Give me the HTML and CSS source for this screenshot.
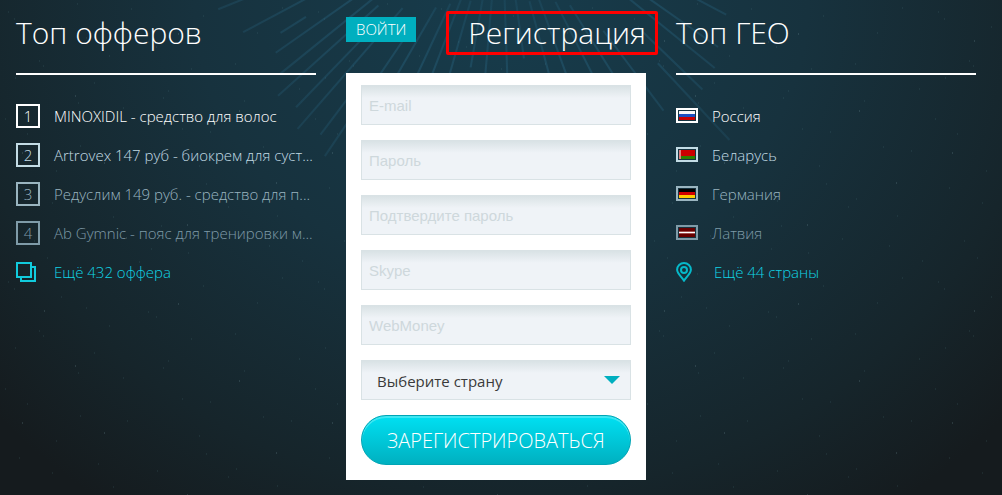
FILE: index.html
```html
<!DOCTYPE html>
<html lang="ru">

<head>
    <meta charset="UTF-8">
    <meta name="viewport" content="width=device-width, initial-scale=1.0">
    <title>Регистрация</title>
    <link rel="stylesheet" href="styles.css">
</head>

<body>
    <svg class="sky" aria-hidden="true">
        <defs>
            <linearGradient id="ray" gradientUnits="userSpaceOnUse" x1="0" y1="90" x2="0" y2="330">
                <stop offset="0" stop-color="#2a6b8a" stop-opacity="0.15" />
                <stop offset="0.4" stop-color="#2a6b8a" stop-opacity="0.35" />
                <stop offset="1" stop-color="#2a6b8a" stop-opacity="0.2" />
            </linearGradient>
            <pattern id="dust" width="310" height="270" patternUnits="userSpaceOnUse">
                <path class="dust-dim" d="M8 12h1M14 19h1M61 27h1M77 4h1M86 38h1M131 9h1M148 42h1M156 47h1M203 16h1M257 33h1M282 8h1M15 78h1M39 61h1M43 66h1M94 83h1M109 56h1M163 98h1M168 91h1M191 69h1M235 64h1M244 101h1M299 89h1M5 119h1M27 134h1M78 103h1M80 146h1M123 108h1M127 151h1M182 129h1M199 166h1M210 132h1M263 147h1M291 151h1M19 188h1M52 203h1M56 171h1M98 194h1M113 217h1M157 201h1M161 226h1M206 184h1M228 207h1M236 199h1M277 216h1M34 241h1M47 258h1M90 236h1M139 262h1M151 249h1M188 253h1M222 239h1M269 246h1M302 261h1" />
                <path class="dust-bright" d="M44 41h1M178 34h1M239 111h1M22 153h1M104 163h1M276 183h1M75 96h1M187 225h1M126 238h1" />
            </pattern>
        </defs>
        <rect width="100%" height="100%" fill="url(#dust)" />
        <svg class="rays" x="50%" y="0" overflow="visible">
            <g transform="translate(0 -105)">
                <path d="M0 90V165" transform="rotate(-8)" />
                <path d="M0 90V180" transform="rotate(-2)" />
                <path d="M0 90V180" transform="rotate(5)" />
                <path d="M0 90V175" transform="rotate(10)" />
                <path d="M0 110V230" transform="rotate(16)" />
                <path d="M0 110V200" transform="rotate(21)" />
                <path d="M0 120V290" transform="rotate(25)" />
                <path d="M0 130V220" transform="rotate(30)" />
                <path d="M0 170V315" transform="rotate(34)" />
                <path d="M0 230V300" transform="rotate(37)" />
                <path d="M0 150V310" transform="rotate(41)" />
                <path d="M0 200V295" transform="rotate(44)" />
                <path d="M0 165V300" transform="rotate(48)" />
                <path d="M0 155V285" transform="rotate(51)" />
                <path d="M0 175V275" transform="rotate(55)" />
                <path d="M0 230V260" transform="rotate(58)" />
                <path d="M0 220V292" transform="rotate(62)" />
                <path d="M0 260V305" transform="rotate(68)" />
                <path d="M0 110V240" transform="rotate(-15)" />
                <path d="M0 110V210" transform="rotate(-20)" />
                <path d="M0 120V270" transform="rotate(-27)" />
                <path d="M0 130V220" transform="rotate(-32)" />
                <path d="M0 170V270" transform="rotate(-37)" />
                <path d="M0 230V335" transform="rotate(-43)" />
                <path d="M0 190V280" transform="rotate(-46)" />
                <path d="M0 160V275" transform="rotate(-51)" />
                <path d="M0 175V265" transform="rotate(-55)" />
                <path d="M0 200V255" transform="rotate(-62)" />
            </g>
        </svg>
    </svg>

    <main class="columns">
        <section class="column">
            <h2 class="title title-line">Топ офферов</h2>
            <ul class="list">
                <li class="item level-1"><span class="number">1</span><span class="name">MINOXIDIL - средство для волос</span></li>
                <li class="item level-2"><span class="number">2</span><span class="name">Artrovex 147 руб - биокрем для суст...</span></li>
                <li class="item level-3"><span class="number">3</span><span class="name">Редуслим 149 руб. - средство для п...</span></li>
                <li class="item level-4"><span class="number">4</span><span class="name">Ab Gymnic - пояс для тренировки м...</span></li>
                <li class="item">
                    <a class="more" href="#">
                        <svg class="more-icon" width="24" height="20" viewBox="0 0 24 20">
                            <path d="M1 1h14v14H1zM5 15v4h14V5h-4" />
                        </svg>
                        <span>Ещё 432 оффера</span>
                    </a>
                </li>
            </ul>
        </section>

        <section class="column">
            <div class="form-head">
                <button class="login" type="button">ВОЙТИ</button>
                <h2 class="title title-marked">Регистрация</h2>
            </div>
            <form class="form">
                <input class="field" type="email" placeholder="E-mail" aria-label="E-mail">
                <input class="field" type="password" placeholder="Пароль" aria-label="Пароль">
                <input class="field" type="password" placeholder="Подтвердите пароль" aria-label="Подтвердите пароль">
                <input class="field" type="text" placeholder="Skype" aria-label="Skype">
                <input class="field" type="text" placeholder="WebMoney" aria-label="WebMoney">
                <div class="select-wrap">
                    <select class="field select" aria-label="Выберите страну">
                        <option>Выберите страну</option>
                        <option>Россия</option>
                        <option>Беларусь</option>
                        <option>Германия</option>
                        <option>Латвия</option>
                    </select>
                </div>
                <button class="submit" type="submit">ЗАРЕГИСТРИРОВАТЬСЯ</button>
            </form>
        </section>

        <section class="column">
            <h2 class="title title-line">Топ ГЕО</h2>
            <ul class="list">
                <li class="item level-1"><span class="flag"><span class="flag-ru"></span></span><span class="name">Россия</span></li>
                <li class="item level-2"><span class="flag"><span class="flag-by"></span></span><span class="name">Беларусь</span></li>
                <li class="item level-3"><span class="flag"><span class="flag-de"></span></span><span class="name">Германия</span></li>
                <li class="item level-4"><span class="flag"><span class="flag-lv"></span></span><span class="name">Латвия</span></li>
                <li class="item">
                    <a class="more" href="#">
                        <svg class="more-icon pin" width="24" height="20" viewBox="0 0 24 20">
                            <path d="M8 18.6C5.6 15 1.100 11.500 1.100 7.800a6.900 6.800 0 0 1 13.800 0C14.900 11.500 10.400 15 8 18.600z" />
                            <circle cx="8" cy="8" r="3" />
                        </svg>
                        <span>Ещё 44 страны</span>
                    </a>
                </li>
            </ul>
        </section>
    </main>
</body>

</html>
```

FILE: styles.css
```css
* {
    box-sizing: border-box;
}

body {
    margin: 0;
    min-height: 100vh;
    position: relative;
    font-family: "Open Sans", sans-serif;
    font-size: 15px;
    font-weight: 300;
    color: #fff;
    background: radial-gradient(ellipse 68% 125% at 50% 0, #173c4c 0%, #17323e 45%, #16252b 80%, #151b1e 100%);
}

/* background */
.sky {
    position: absolute;
    top: 0;
    left: 0;
    width: 100%;
    height: 100%;
}

.dust-dim {
    stroke: #5f8c98;
    opacity: 0.25;
}

.dust-bright {
    stroke: #8fb4bd;
    opacity: 0.35;
}

.rays path {
    stroke: url(#ray);
    stroke-width: 2;
}

/* columns */
.columns {
    position: relative;
    display: grid;
    grid-template-columns: repeat(3, minmax(0, 1fr));
    gap: 30px;
    padding: 11px 26px 15px 16px;
}

.title {
    margin: 0;
    font-size: 30px;
    line-height: 44px;
    font-weight: 300;
}

.title-line {
    padding-bottom: 18px;
    border-bottom: 2px solid #fff;
}

.list {
    list-style: none;
    margin: 0;
    padding: 21px 0 0;
}

.item {
    display: flex;
    align-items: center;
    height: 39px;
}

.name {
    flex: 1;
    white-space: nowrap;
}

.level-1 {
    color: #fff;
}

.level-2 {
    color: #c3dce5;
}

.level-3 {
    color: #9ab5c0;
}

.level-4 {
    color: #7f9ba8;
}

.number {
    width: 24px;
    height: 24px;
    margin-right: 14px;
    border: 2px solid;
    line-height: 20px;
    text-align: center;
}

.more {
    display: flex;
    align-items: center;
    gap: 14px;
    color: #11d3e5;
    text-decoration: none;
}

.more-icon {
    fill: none;
    stroke: #11cbdd;
    stroke-width: 2;
}

.pin {
    stroke: #06b9c9;
}

/* flags */
.flag {
    width: 22px;
    height: 15px;
    margin-right: 14px;
    padding: 1px;
    border: 2px solid;
}

.flag span {
    display: block;
    height: 9px;
}

.flag-ru {
    background: linear-gradient(#f5f5f5 3px, #1c4fc0 3px 6px, #c80000 6px);
}

.flag-by {
    background: linear-gradient(90deg, #e08080 2px, transparent 2px), linear-gradient(#cc0000 6px, #2f8000 6px);
}

.flag-de {
    background: linear-gradient(#000 3px, #d00000 3px 6px, #ffcc00 6px);
}

.flag-lv {
    background: linear-gradient(#680000 3px, #a05050 3px 4px, #fff 4px 5px, #a05050 5px 6px, #680000 6px);
}

/* registration form */
.form-head {
    display: flex;
    justify-content: space-between;
    align-items: flex-start;
    height: 62px;
}

.login {
    height: 25px;
    margin-top: 6px;
    padding: 0 10px;
    border: 0;
    background: #00afbf;
    color: #fff;
    font: 300 15px/25px "Open Sans", sans-serif;
}

.title-marked {
    margin-right: -12px;
    padding: 0 12px 0 22px;
    border-radius: 2px;
    box-shadow: inset 0 0 0 3px #f00;
}

.form {
    display: flex;
    flex-direction: column;
    gap: 15px;
    padding: 12px 15px 15px;
    background: #fff;
}

.field {
    width: 100%;
    height: 40px;
    margin: 0;
    padding: 0 7px;
    border: 1px solid #d9e2e5;
    border-radius: 0;
    background: linear-gradient(#d9e2e5, #eff3f7 12px);
    font: 15px "Liberation Sans", Arial, sans-serif;
    color: #3a3a3a;
}

.field::placeholder {
    color: #ced8dc;
    opacity: 1;
}

.select-wrap {
    position: relative;
}

.select-wrap::after {
    content: "";
    position: absolute;
    top: 16px;
    right: 11px;
    border: 8px solid transparent;
    border-top-color: #00afbf;
    border-bottom: 0;
    pointer-events: none;
}

.select {
    display: block;
    appearance: none;
    padding: 2px 30px 0 15px;
    font: 15px "Open Sans", sans-serif;
}

.submit {
    height: 50px;
    padding: 0;
    border: 1px solid #00a5b5;
    border-radius: 25px;
    background: linear-gradient(#00e0f2, #00b0c0);
    box-shadow: inset 0 2px 0 #3fe6f2;
    color: #fff;
    font: 300 20px "Open Sans", sans-serif;
}
```
